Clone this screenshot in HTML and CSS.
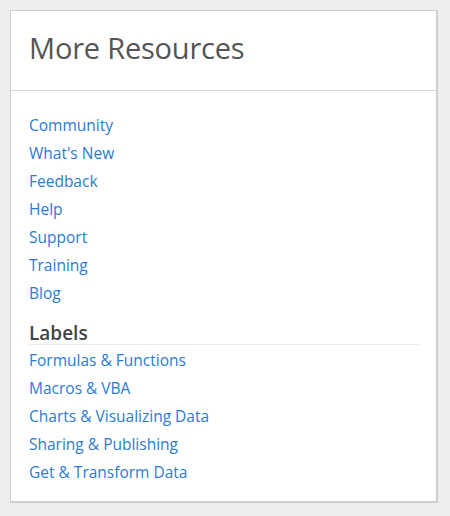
FILE: index.html
```html
<!DOCTYPE html>
<html>
<head>
<meta charset="utf-8">
<link rel="stylesheet" href="styles.css">
</head>
<body>
<div class="card">
  <div class="card-header">
    <h2 class="title">More Resources</h2>
  </div>
  <div class="card-body">
    <ul class="links">
      <li><a href="#">Community</a></li>
      <li><a href="#">What's New</a></li>
      <li><a href="#">Feedback</a></li>
      <li><a href="#">Help</a></li>
      <li><a href="#">Support</a></li>
      <li><a href="#">Training</a></li>
      <li><a href="#">Blog</a></li>
    </ul>
    <h3 class="section">Labels</h3>
    <ul class="links">
      <li><a href="#">Formulas &amp; Functions</a></li>
      <li><a href="#">Macros &amp; VBA</a></li>
      <li><a href="#">Charts &amp; Visualizing Data</a></li>
      <li><a href="#">Sharing &amp; Publishing</a></li>
      <li><a href="#">Get &amp; Transform Data</a></li>
    </ul>
  </div>
</div>
</body>
</html>
```

FILE: styles.css
```css
html, body {
  margin: 0;
  padding: 0;
  background: #efeded;
}
body {
  padding: 10px 0 0 10px;
  font-family: "Open Sans", "Noto Sans", sans-serif;
}
.card {
  width: 425px;
  height: 490px;
  background: #fff;
  border: 1px solid #cfcfcf;
  border-right: 2px solid #cfcfcf;
  border-bottom: 2px solid #cfcfcf;
}
.card-header {
  height: 79px;
  border-bottom: 1px solid #d4d4d4;
  padding: 0 18px 6px 18px;
  box-sizing: border-box;
  height: 80px;
  display: flex;
  align-items: center;
}
.title {
  margin: 0;
  font-size: 29px;
  font-weight: 400;
  color: #555;
  letter-spacing: -0.2px;
}
.card-body {
  padding: 20px 18px 0 18px;
}
.links {
  list-style: none;
  margin: 0;
  padding: 0;
}
.links li {
  line-height: 28px;
  font-size: 15.5px;
}
.links a {
  color: #2b7bd4;
  text-decoration: none;
}
.section {
  margin: 16px 0 1px 0;
  font-size: 19px;
  font-weight: 600;
  color: #444;
  line-height: 20px;
  padding-bottom: 1px;
  border-bottom: 1px solid #ececec;
  width: 390px;
}
```
